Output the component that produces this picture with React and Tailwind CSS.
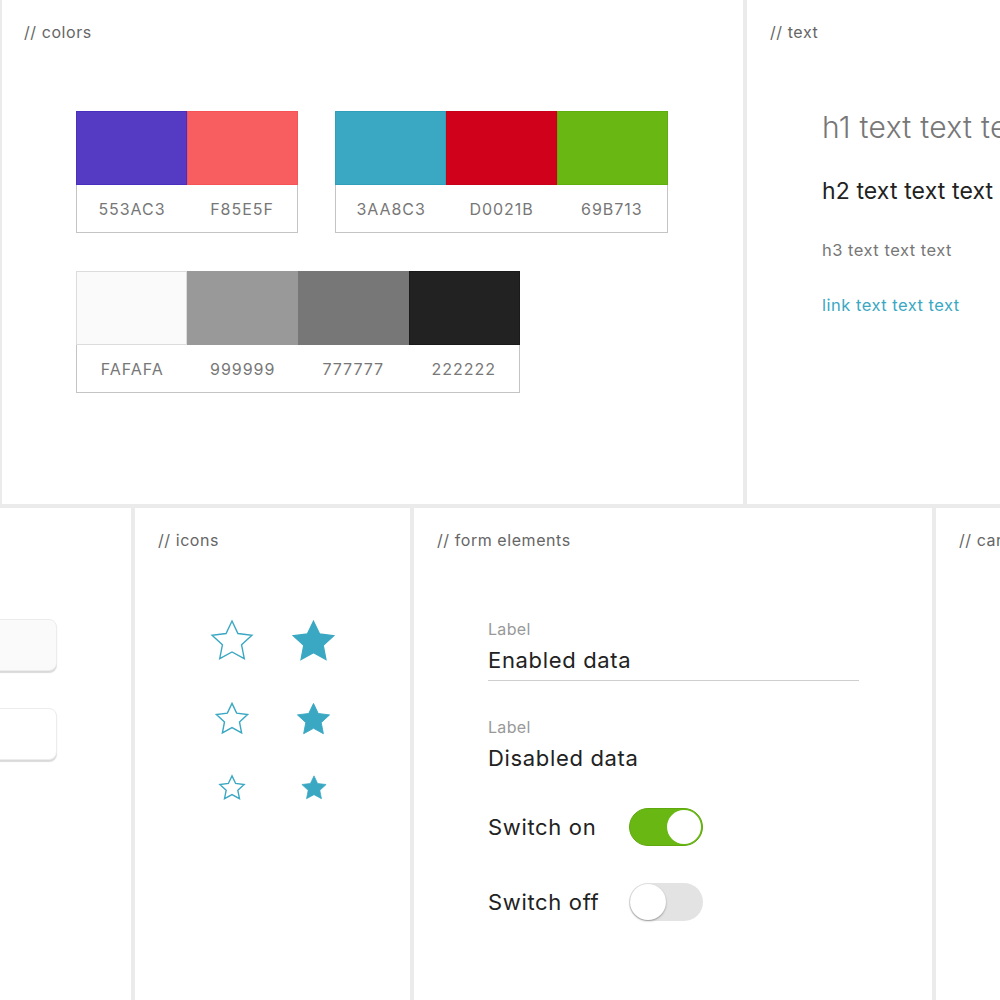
import React from "react";

const STAR = "12,1.6 15.1,8.1 22.4,9 17,14 18.4,21.2 12,17.7 5.6,21.2 7,14 1.6,9 8.9,8.1";

function Star({ size, filled }) {
  return (
    <svg width={size} height={size} viewBox="0 0 24 24" className="block">
      <polygon
        points={STAR}
        fill={filled ? "#3AA8C3" : "none"}
        stroke="#3AA8C3"
        strokeWidth={filled ? 0.6 : 24 / size * 1.4}
        strokeLinejoin="miter"
      />
    </svg>
  );
}

function Swatch({ bg, border }) {
  return <div className="h-[74px] w-[111px] border" style={{ background: bg, borderColor: border }} />;
}

function Group({ items }) {
  return (
    <div className="inline-flex flex-col">
      <div className="flex">
        {items.map((it) => (
          <Swatch key={it[0]} bg={"#" + it[0]} border={it[1]} />
        ))}
      </div>
      <div className="flex h-[48px] w-full border-x border-b border-[#c4c4c4] bg-white">
        {items.map((it) => (
          <div
            key={it[0]}
            className="flex flex-1 items-center justify-center text-[16px] tracking-[0.06em] text-[#777]"
          >
            {it[0]}
          </div>
        ))}
      </div>
    </div>
  );
}

function Title({ children }) {
  return <div className="text-[16px] leading-6 tracking-[0.035em] text-[#666] whitespace-nowrap">{children}</div>;
}

export default function App() {
  return (
    <div className="h-[1000px] w-[1000px] overflow-hidden bg-[#ebebeb] font-['Inter','Liberation_Sans',sans-serif]">
      <div className="flex h-[504px] gap-1 pl-[2px]">
        <div className="w-[741px] shrink-0 bg-white pl-[22px] pt-5">
          <Title>// colors</Title>
          <div className="ml-[52px] mt-[67px]">
            <div className="flex gap-[37px]">
              <Group items={[["553AC3", "#4a2fbf"], ["F85E5F", "#f45455"]]} />
              <Group items={[["3AA8C3", "#2f9fbb"], ["D0021B", "#c80018"], ["69B713", "#60ae0d"]]} />
            </div>
            <div className="mt-[38px] flex">
              <Group items={[["FAFAFA", "#dcdcdc"], ["999999", "#999999"], ["777777", "#777777"], ["222222", "#1a1a1a"]]} />
            </div>
          </div>
        </div>
        <div className="w-[400px] shrink-0 bg-white pl-[23px] pt-5">
          <Title>// text</Title>
          <div className="ml-[52px] whitespace-nowrap">
            <div className="mt-[65px] text-[30px] font-light leading-9 tracking-[0.01em] text-[#777]">h1 text text text</div>
            <div className="mt-[32px] text-[23px] leading-7 tracking-[0.005em] text-[#222]">h2 text text text</div>
            <div className="mt-[33px] text-[16.5px] leading-6 tracking-[0.03em] text-[#777]">h3 text text text</div>
            <div className="mt-[31px] text-[16.5px] leading-6 tracking-[0.03em] text-[#3AA8C3]">link text text text</div>
          </div>
        </div>
      </div>

      <div className="mt-1 flex h-[492px] gap-1">
        <div className="ml-[-69px] w-[200px] shrink-0 bg-white pr-[74px] pt-[111px]">
          <div className="flex flex-col items-end gap-[37px]">
            <div className="h-[52px] w-[120px] rounded-lg border border-[#ececec] bg-[#fafafa] shadow-[0_2px_1px_rgba(0,0,0,0.15)]" />
            <div className="h-[52px] w-[120px] rounded-lg border border-[#ececec] bg-white shadow-[0_2px_1px_rgba(0,0,0,0.15)]" />
          </div>
        </div>

        <div className="w-[275px] shrink-0 bg-white pl-[23px] pt-5">
          <Title>// icons</Title>
          <div className="ml-[-23px] mt-[67px] grid grid-cols-[82px_82px] justify-center justify-items-center">
            <div className="flex h-[44px] items-center"><Star size={46} /></div>
            <div className="flex h-[44px] items-center"><Star size={47} filled /></div>
            <div className="mt-[39px] flex h-[34px] items-center"><Star size={36} /></div>
            <div className="mt-[39px] flex h-[34px] items-center"><Star size={37} filled /></div>
            <div className="mt-[39px] flex h-[26px] items-center"><Star size={28} /></div>
            <div className="mt-[39px] flex h-[26px] items-center"><Star size={28} filled /></div>
          </div>
        </div>

        <div className="w-[518px] shrink-0 bg-white pl-[23px] pt-5">
          <Title>// form elements</Title>
          <div className="ml-[51px] mt-[67px] w-[371px]">
            <div className="border-b border-[#cfcfcf] pb-[6px]">
              <div className="text-[16px] leading-5 tracking-[0.02em] text-[#999]">Label</div>
              <div className="mt-[7px] text-[22px] leading-7 tracking-[0.03em] text-[#222]">Enabled data</div>
            </div>
            <div className="mt-9 text-[16px] leading-5 tracking-[0.02em] text-[#999]">Label</div>
            <div className="mt-[7px] text-[22px] leading-7 tracking-[0.03em] text-[#222]">Disabled data</div>
            <div className="mt-9 flex h-[38px] items-center">
              <div className="w-[141px] text-[22px] tracking-[0.03em] text-[#222]">Switch on</div>
              <div className="flex h-[38px] w-[74px] items-center justify-end rounded-full border border-[#5fa80e] bg-[#69B713] p-[1px]">
                <div className="h-[34px] w-[34px] rounded-full bg-white" />
              </div>
            </div>
            <div className="mt-[37px] flex h-[38px] items-center">
              <div className="w-[141px] text-[22px] tracking-[0.03em] text-[#222]">Switch off</div>
              <div className="flex h-[38px] w-[74px] items-center rounded-full bg-[#e3e3e3] p-[1px]">
                <div className="h-[36px] w-[36px] rounded-full bg-white shadow-[0_1px_2px_rgba(0,0,0,0.35)]" />
              </div>
            </div>
          </div>
        </div>

        <div className="w-[300px] shrink-0 bg-white pl-[23px] pt-5">
          <Title>// cards</Title>
        </div>
      </div>
    </div>
  );
}
